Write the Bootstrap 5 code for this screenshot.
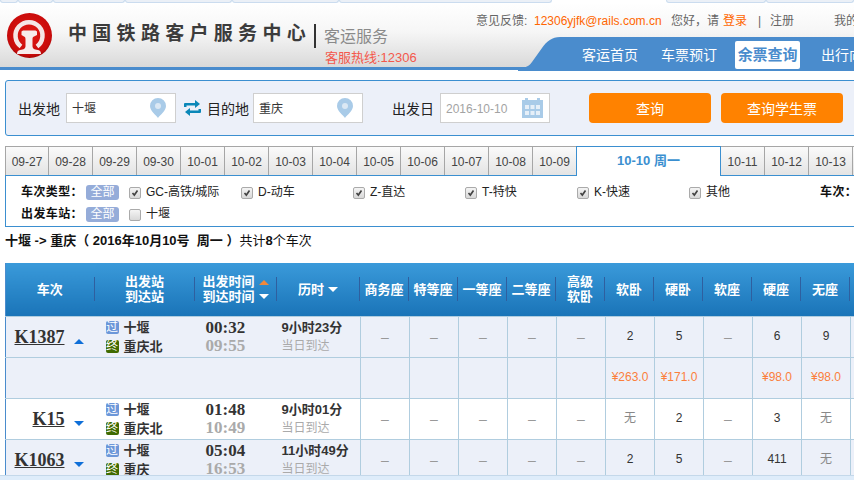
<!DOCTYPE html>
<html lang="zh-CN"><head><meta charset="utf-8">
<title>余票查询</title>
<link rel="stylesheet" href="https://cdn.jsdelivr.net/npm/bootstrap@5.3.0/dist/css/bootstrap.min.css">
<style>
html,body{height:100%;overflow:hidden}
body{font:12px/1.3 "Liberation Sans","Noto Sans CJK SC",sans-serif;color:#333;background:#fff}
.page-frame{height:480px;width:854px;overflow:hidden}
.page-main{min-height:0;overflow:hidden}
.page-inner{width:1000px}
.bottom-strip{height:5px;background:#deecfa;border-top:1px solid #c4d8ea;flex:none}
.tab-strip{height:3px;background:#fff;flex:none}
.tab-strip span{height:3px;background:#ebf0f7;border:1px solid #cbdcef;border-top:0;border-radius:0 0 3px 3px}
.ts-a{width:18px}.ts-b{width:35px}.ts-c{width:72px}.ts-d{width:107px}.ts-e{width:214px}.ts-f{width:100px}.ts-g{width:88px}
.tab-strip span.ts-gap{width:114px;background:#fff;border-color:#fff}
.head-bar{height:68px;background:linear-gradient(#fff 0,#f6f6f6 45%,#d9d9d9 100%);border-bottom:3px solid #4a8ccd;position:relative}
.logo-box{width:45px;height:45px;margin:10px 0 0 7px;flex:none}
.site-name{font-size:19px;line-height:24px;letter-spacing:5.3px;color:#3c3c3c;font-weight:700;margin:19px 0 0 16px;white-space:nowrap;width:243px}
.site-bar{width:2px;height:24px;background:#333;margin:21px 0 0 3px;flex:none}
.site-sub{margin:23px 0 0 8px;font-size:16px;line-height:22px;color:#8a8a8a;white-space:nowrap}
.site-hot{font-size:13px;line-height:14px;color:#f4584c;margin:3px 0 0 1px}
.head-links{position:absolute;left:476px;top:10px;white-space:nowrap;color:#666;line-height:16px;display:flex}
.head-links em{font-style:normal;color:#f60}
.hl-a{width:58px;flex:none}.hl-b{width:137px;flex:none}.hl-c{width:52px;flex:none}.hl-d{width:35px;flex:none}.hl-e{width:12px;flex:none}.hl-f{width:64px;flex:none}
.head-curve{position:absolute;left:518px;top:34px;width:42px;height:34px}
.head-nav{position:absolute;left:560px;top:34px;height:34px;width:294px;background:#4a8ccd;display:flex;color:#fff;font-size:14px;line-height:20px;padding-left:22px;white-space:nowrap;overflow:hidden}
.nav-cell{margin-top:8px;flex:none;width:79px}
.nav-cell.nav-second{width:74px}
.nav-cell.nav-now{background:#fff;color:#4a8ccd;font-weight:700;border-radius:2px;height:28px;margin-top:4px;width:65px;line-height:28px;text-align:center;margin-right:21px;font-size:15px;letter-spacing:-.1px}
.query-box{height:56px;margin:10px 0 0 5px;background:#ecf0f9;border:1px solid #3b8fd0;border-radius:3px;padding:12px 0 0 12px;font-size:14px;color:#222;width:1000px;display:flex;align-items:flex-start}
.q-label{line-height:32px;white-space:nowrap}
.q-label-date{margin-left:29px}
.q-input{width:110px;height:30px;border:1px solid #cfcfcf;background:#fff;padding:0 5px;font-size:12px;line-height:30px;color:#333;margin-left:6px;display:flex;justify-content:space-between;flex:none}
.q-input.q-input-to{margin-left:4px}
.q-input svg{margin:4px 4px 0 0}
.q-swap{margin:7px 6px 0 8px;flex:none}
.q-date{color:#a3a3a3;margin-left:6px}
.q-date svg{margin:4px 1px 0 0}
.q-btn{background:#ff8200;color:#fff;border:0;border-radius:4px;height:30px;width:122px;font-size:14px;line-height:30px;padding:1px 0 0;flex:none;margin-left:10px}
.q-btn.q-btn-first{margin-left:39px}
.q-btn:hover{background:#ff8200;color:#fff}
.date-tabs{margin:10px 0 0 5px;height:29px;display:flex;width:1000px}
.date-tabs>div{width:44px;height:30px;border:1px solid #a6a6a6;border-left:0;border-bottom:0;background:linear-gradient(#fafafa,#e3e3e3);text-align:center;line-height:31px;color:#444;flex:none;position:relative;z-index:1}
.date-tabs>div:first-child{border-left:1px solid #a6a6a6;width:44px}
.date-tabs>div.tab-now{width:145px;background:#fff;border:1px solid #3b8fd0;border-bottom:0;color:#3b8fd0;font-weight:700;font-size:13px;height:30px;z-index:3;line-height:28px;margin-left:-1px}
.filter-box{height:52px;margin-left:5px;width:1000px;border:1px solid #3b8fd0;border-right:0;padding:5px 0 0 15px;position:relative;z-index:2;color:#222}
.filter-row{height:22px;display:flex;align-items:center;white-space:nowrap}
.f-title{font-weight:700;width:65px;flex:none;letter-spacing:.4px;color:#111;padding-top:2px}
.f-all{background:#95acd9;color:#fff;border-radius:3px;height:15px;width:33px;text-align:center;line-height:15px;margin-right:10px;flex:none;font-size:12px}
.f-item{width:112px;display:flex;align-items:center;gap:5px;flex:none;padding-top:2px}
.f-item.f-item-wide{width:131px}
.f-check{width:12px;height:12px;border:1px solid #aaa;border-radius:2px;background:linear-gradient(#f4f4f4,#d8d8d8);display:block;flex:none}
.summary-line{margin:6px 0 0 5px;line-height:16px;font-size:13px;color:#111;height:16px;white-space:nowrap}
.train-table{margin:14px 0 0 5px;width:995px;table-layout:fixed;border-collapse:collapse;border-left:1px solid #4a8ccd}
.col-a{width:90px}.col-b{width:100px}.col-c{width:82px}.col-d{width:83px}.col-s{width:49px}
.train-table th{height:53px;padding:0;background:linear-gradient(#3a9ada,#1a74b8);color:#fff;font-size:13px;line-height:15px;text-align:center;font-weight:700;vertical-align:middle}
.th-wrap{height:24px;display:flex;align-items:center;justify-content:center;border-right:1px solid #2f5f9f;margin-right:1px;white-space:nowrap}
.train-table td{padding:0;border:1px solid #b0cddf;border-left:0;text-align:center;height:41px;font-size:12px;vertical-align:middle;color:#333}
.train-table tr.row-shade td{background:#ecf0f9}
.train-table td.td-main{border-right:0}
.train-table td.td-dash{color:#999;font-size:14px}
.train-table td.td-none{color:#888}
.train-table td.td-price{color:#fb7f3c;vertical-align:bottom;padding-bottom:12px}
.train-code{font:700 18px/20px "Liberation Serif","Noto Sans CJK SC",serif;color:#333;text-decoration:underline}
.code-wrap{display:flex;align-items:center;justify-content:flex-end;gap:9px;padding-right:12px}
.arrow-up,.arrow-down{width:0;height:0;border-left:5px solid transparent;border-right:5px solid transparent;display:block;flex:none}
.arrow-up{border-bottom:5px solid #0f6fd8;margin-top:9px}
.arrow-down{border-top:5px solid #0f6fd8;margin-top:9px}
.stations{text-align:left;padding-left:10px;line-height:19px;font-size:13px;font-weight:700;color:#333;white-space:nowrap}
.stations div{display:flex;align-items:center;gap:5px}
.st-mark{width:13px;height:13px;color:#fff;font-size:12px;line-height:13px;font-weight:400;text-align:center;border-radius:2px;display:block;flex:none;overflow:hidden;font-style:normal}
.st-pass{background:#6c97d9}
.st-via{background:#3f6a00}
.times{font:700 17px/18px "Liberation Serif",serif;color:#333;text-align:left;padding-left:10px}
.times div+div{color:#aaa}
.duration{text-align:left;padding-left:4px;line-height:18px;font-size:13px;font-weight:700;white-space:nowrap}
.duration div+div{color:#aaa;font-weight:400;font-size:12px}
.sort-t{width:0;height:0;border-left:5px solid transparent;border-right:5px solid transparent;display:block}
.sort-stack{display:flex;flex-direction:column;gap:9px;margin-left:4px}
.sort-up{border-bottom:5px solid #f0883c}
.sort-dn{border-top:5px solid #fff}
</style></head>
<body>
<div class="page-frame d-flex flex-column">
<div class="tab-strip d-flex">
<span class="ts-a"></span><span class="ts-b"></span><span class="ts-c"></span><span class="ts-d"></span><span class="ts-d"></span><span class="ts-e"></span><span class="ts-gap"></span><span class="ts-f"></span><span class="ts-g"></span>
</div>
<header class="head-bar d-flex">
<svg class="logo-box" viewBox="0 0 45 45">
<defs><radialGradient id="rg" cx=".5" cy=".45" r=".6"><stop offset="0" stop-color="#e01a14"/><stop offset=".8" stop-color="#c90b0b"/><stop offset="1" stop-color="#8f0505"/></radialGradient></defs>
<circle cx="22.5" cy="22.5" r="22.5" fill="url(#rg)"/>
<path d="M14 33.500A13.500 13.500 0 1 1 30 33.500" fill="none" stroke="#f5e6e6" stroke-width="4.500"/>
<path d="M16 17.500H28.500L30 18.500V22L27 23.500C25.500 24 25.500 25 25.500 27V33C25.500 35.500 27 36.500 31 37C33 37.500 34 38.500 34 41H10C10 38.500 11 37.500 13 37C17 36.500 18.500 35.500 18.500 33V27C18.500 25 18.500 24 17 23.500L14.500 22V18.500Z" fill="#f7ecec"/>
</svg>
<div class="site-name">中国铁路客户服务中心</div>
<div class="site-bar"></div>
<div class="site-sub">客运服务<div class="site-hot">客服热线:12306</div></div>
<div class="head-links"><span class="hl-a">意见反馈:</span><span class="hl-b"><em>12306yjfk@rails.com.cn</em></span><span class="hl-c">您好，请</span><span class="hl-d"><em>登录</em></span><span class="hl-e">|</span><span class="hl-f">注册</span><span>我的12306</span></div>
<svg class="head-curve" viewBox="0 0 42 34"><path d="M0 31C8 31 11 29 14 25L24 11C29 4 34 0 42 0V34H0Z" fill="#4a8ccd"/></svg>
<nav class="head-nav"><div class="nav-cell">客运首页</div><div class="nav-cell nav-second">车票预订</div><div class="nav-cell nav-now">余票查询</div><div class="nav-cell">出行向导</div></nav>
</header>
<main class="page-main flex-grow-1">
<div class="page-inner">
<form class="query-box">
<span class="q-label">出发地</span>
<div class="q-input"><span>十堰</span><svg width="16" height="20" viewBox="0 0 16 20"><path d="M8 0a8 8 0 0 1 8 8c0 5-6 9-8 12C6 17 0 13 0 8a8 8 0 0 1 8-8z" fill="#a9cbe8"/><circle cx="8" cy="8" r="3" fill="#dbe8f4"/></svg></div>
<svg class="q-swap" width="17" height="16" viewBox="0 0 17 16"><path d="M0 7V4a1 1 0 0 1 1-1h10V0l5 4-5 4V5.500H2.500V7z M17 9v3a1 1 0 0 1-1 1H6v3l-5-4 5-4v2.500h8.500V9z" fill="#0a87b8"/></svg>
<span class="q-label">目的地</span>
<div class="q-input q-input-to"><span>重庆</span><svg width="16" height="20" viewBox="0 0 16 20"><path d="M8 0a8 8 0 0 1 8 8c0 5-6 9-8 12C6 17 0 13 0 8a8 8 0 0 1 8-8z" fill="#a9cbe8"/><circle cx="8" cy="8" r="3" fill="#dbe8f4"/></svg></div>
<span class="q-label q-label-date">出发日</span>
<div class="q-input q-date"><span>2016-10-10</span><svg width="21" height="20" viewBox="0 0 21 20"><rect y="2" width="21" height="18" fill="#a9cbe8"/><rect x="3" width="3" height="4" fill="#a9cbe8"/><rect x="15" width="3" height="4" fill="#a9cbe8"/><g fill="#e6eff8"><rect x="3" y="7" width="4" height="4"/><rect x="8.500" y="7" width="4" height="4"/><rect x="14" y="7" width="4" height="4"/><rect x="3" y="13" width="4" height="4"/><rect x="8.500" y="13" width="4" height="4"/><rect x="14" y="13" width="4" height="4"/></g></svg></div>
<button type="button" class="btn q-btn q-btn-first">查询</button>
<button type="button" class="btn q-btn">查询学生票</button>
</form>
<div class="date-tabs">
<div>09-27</div><div>09-28</div><div>09-29</div><div>09-30</div><div>10-01</div><div>10-02</div><div>10-03</div><div>10-04</div><div>10-05</div><div>10-06</div><div>10-07</div><div>10-08</div><div>10-09</div><div class="tab-now">10-10 周一</div><div>10-11</div><div>10-12</div><div>10-13</div><div>10-14</div>
</div>
<section class="filter-box">
<div class="filter-row"><span class="f-title">车次类型：</span><span class="f-all">全部</span>
<span class="f-item"><svg class="f-check" viewBox="0 0 12 12"><path d="M3 6l2.200 2.500L9 3" fill="none" stroke="#444" stroke-width="2"/></svg>GC-高铁/城际</span>
<span class="f-item"><svg class="f-check" viewBox="0 0 12 12"><path d="M3 6l2.200 2.500L9 3" fill="none" stroke="#444" stroke-width="2"/></svg>D-动车</span>
<span class="f-item"><svg class="f-check" viewBox="0 0 12 12"><path d="M3 6l2.200 2.500L9 3" fill="none" stroke="#444" stroke-width="2"/></svg>Z-直达</span>
<span class="f-item"><svg class="f-check" viewBox="0 0 12 12"><path d="M3 6l2.200 2.500L9 3" fill="none" stroke="#444" stroke-width="2"/></svg>T-特快</span>
<span class="f-item"><svg class="f-check" viewBox="0 0 12 12"><path d="M3 6l2.200 2.500L9 3" fill="none" stroke="#444" stroke-width="2"/></svg>K-快速</span>
<span class="f-item f-item-wide"><svg class="f-check" viewBox="0 0 12 12"><path d="M3 6l2.200 2.500L9 3" fill="none" stroke="#444" stroke-width="2"/></svg>其他</span>
<span class="f-title">车次：</span></div>
<div class="filter-row"><span class="f-title">出发车站：</span><span class="f-all">全部</span><span class="f-item"><span class="f-check"></span>十堰</span></div>
</section>
<div class="summary-line"><b>十堰 -&gt; 重庆（ 2016年10月10号 &nbsp;周一 ）</b>共计<b>8</b>个车次</div>
<table class="train-table">
<colgroup><col class="col-a"><col class="col-b"><col class="col-c"><col class="col-d"><col span="14" class="col-s"></colgroup>
<thead><tr>
<th><div class="th-wrap">车次</div></th>
<th><div class="th-wrap">出发站<br>到达站</div></th>
<th><div class="th-wrap"><span>出发时间<br>到达时间</span><span class="sort-stack"><i class="sort-t sort-up"></i><i class="sort-t sort-dn"></i></span></div></th>
<th><div class="th-wrap">历时<i class="sort-t sort-dn ms-1"></i></div></th>
<th><div class="th-wrap">商务座</div></th><th><div class="th-wrap">特等座</div></th><th><div class="th-wrap">一等座</div></th><th><div class="th-wrap">二等座</div></th><th><div class="th-wrap">高级<br>软卧</div></th><th><div class="th-wrap">软卧</div></th><th><div class="th-wrap">硬卧</div></th><th><div class="th-wrap">软座</div></th><th><div class="th-wrap">硬座</div></th><th><div class="th-wrap">无座</div></th><th><div class="th-wrap">其他</div></th>
</tr></thead>
<tbody>
<tr class="row-shade">
<td class="td-main"><div class="code-wrap"><span class="train-code">K1387</span><i class="arrow-up"></i></div></td>
<td class="td-main"><div class="stations"><div><i class="st-mark st-pass">过</i>十堰</div><div><i class="st-mark st-via">终</i>重庆北</div></div></td>
<td class="td-main"><div class="times"><div>00:32</div><div>09:55</div></div></td>
<td><div class="duration"><div>9小时23分</div><div>当日到达</div></div></td>
<td class="td-dash">–</td><td class="td-dash">–</td><td class="td-dash">–</td><td class="td-dash">–</td><td class="td-dash">–</td><td>2</td><td>5</td><td class="td-dash">–</td><td>6</td><td>9</td><td class="td-dash">–</td>
</tr>
<tr class="row-shade">
<td class="td-main"></td><td class="td-main"></td><td class="td-main"></td><td></td>
<td></td><td></td><td></td><td></td><td></td><td class="td-price">¥263.0</td><td class="td-price">¥171.0</td><td></td><td class="td-price">¥98.0</td><td class="td-price">¥98.0</td><td></td>
</tr>
<tr>
<td class="td-main"><div class="code-wrap"><span class="train-code">K15</span><i class="arrow-down"></i></div></td>
<td class="td-main"><div class="stations"><div><i class="st-mark st-pass">过</i>十堰</div><div><i class="st-mark st-via">终</i>重庆北</div></div></td>
<td class="td-main"><div class="times"><div>01:48</div><div>10:49</div></div></td>
<td><div class="duration"><div>9小时01分</div><div>当日到达</div></div></td>
<td class="td-dash">–</td><td class="td-dash">–</td><td class="td-dash">–</td><td class="td-dash">–</td><td class="td-dash">–</td><td class="td-none">无</td><td>2</td><td class="td-dash">–</td><td>3</td><td class="td-none">无</td><td class="td-dash">–</td>
</tr>
<tr class="row-shade">
<td class="td-main"><div class="code-wrap"><span class="train-code">K1063</span><i class="arrow-down"></i></div></td>
<td class="td-main"><div class="stations"><div><i class="st-mark st-pass">过</i>十堰</div><div><i class="st-mark st-via">终</i>重庆</div></div></td>
<td class="td-main"><div class="times"><div>05:04</div><div>16:53</div></div></td>
<td><div class="duration"><div>11小时49分</div><div>当日到达</div></div></td>
<td class="td-dash">–</td><td class="td-dash">–</td><td class="td-dash">–</td><td class="td-dash">–</td><td class="td-dash">–</td><td>2</td><td>5</td><td class="td-dash">–</td><td>411</td><td class="td-none">无</td><td class="td-dash">–</td>
</tr>
</tbody></table>
</div>
</main>
<div class="bottom-strip"></div>
</div>
<script src="https://cdn.jsdelivr.net/npm/bootstrap@5.3.0/dist/js/bootstrap.bundle.min.js"></script>
</body></html>
